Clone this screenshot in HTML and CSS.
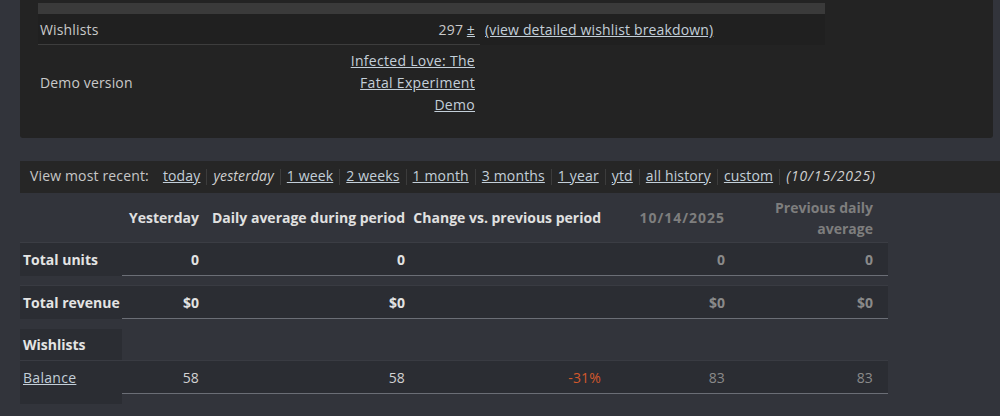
FILE: index.html
```html
<!DOCTYPE html>
<html lang="en">
<head>
    <meta charset="UTF-8">
    <title>Sales &amp; Activations</title>
    <link rel="stylesheet" href="styles.css">
</head>
<body>
    <div class="card">
        <table class="summary">
            <tr class="cap"><td colspan="3"></td></tr>
            <tr class="wish">
                <td class="label">Wishlists</td>
                <td class="num">297 <a href="#">±</a></td>
                <td class="extra"><a href="#">(view detailed wishlist breakdown)</a></td>
            </tr>
            <tr class="demo">
                <td class="label">Demo version</td>
                <td class="num"><a href="#">Infected Love: The Fatal Experiment Demo</a></td>
                <td class="extra"></td>
            </tr>
        </table>
    </div>

    <div class="range-bar">
        <span class="range-title">View most recent:</span>
        <a href="#">today</a><span class="sep"></span>
        <em>yesterday</em><span class="sep"></span>
        <a href="#">1 week</a><span class="sep"></span>
        <a href="#">2 weeks</a><span class="sep"></span>
        <a href="#">1 month</a><span class="sep"></span>
        <a href="#">3 months</a><span class="sep"></span>
        <a href="#">1 year</a><span class="sep"></span>
        <a href="#">ytd</a><span class="sep"></span>
        <a href="#">all history</a><span class="sep"></span>
        <a href="#">custom</a><span class="sep"></span>
        <em class="range-date">(10/15/2025)</em>
    </div>

    <table class="sales">
        <colgroup>
            <col class="c-label">
            <col class="c-yday">
            <col class="c-avg">
            <col class="c-change">
            <col class="c-prev">
            <col class="c-prevavg">
        </colgroup>
        <tr class="head">
            <th></th>
            <th>Yesterday</th>
            <th>Daily average during period</th>
            <th>Change vs. previous period</th>
            <th class="dim date">10/14/2025</th>
            <th class="dim wrap">Previous daily average</th>
        </tr>
        <tr class="row first">
            <td class="label">Total units</td>
            <td class="strong">0</td>
            <td class="strong">0</td>
            <td></td>
            <td class="strong dim">0</td>
            <td class="strong dim">0</td>
        </tr>
        <tr class="gap"><td colspan="6"></td></tr>
        <tr class="row">
            <td class="label">Total revenue</td>
            <td class="strong">$0</td>
            <td class="strong">$0</td>
            <td></td>
            <td class="strong dim">$0</td>
            <td class="strong dim">$0</td>
        </tr>
        <tr class="gap wide"><td colspan="6"></td></tr>
        <tr class="section">
            <td class="label">Wishlists</td>
            <td colspan="5"></td>
        </tr>
        <tr class="row">
            <td class="label link"><a href="#">Balance</a></td>
            <td>58</td>
            <td>58</td>
            <td class="neg">-31%</td>
            <td class="dim">83</td>
            <td class="dim">83</td>
        </tr>
        <tr class="tail">
            <td class="label"></td>
            <td colspan="5"></td>
        </tr>
    </table>
</body>
</html>
```

FILE: styles.css
```css
body {
    margin: 0;
    background: #32343b;
    font-family: "Open Sans", "Liberation Sans", sans-serif;
    font-size: 14px;
    letter-spacing: 0.15px;
    color: #c9c9c9;
}

a {
    color: #c3cfd9;
    text-decoration: underline;
}

/* top card */
.card {
    width: 973px;
    margin-left: 20px;
    padding: 3px 18px 17px;
    box-sizing: border-box;
    background: #232323;
    border-radius: 0 0 3px 3px;
}
.summary {
    width: 787px;
    border-collapse: collapse;
}
.summary td {
    padding: 0;
}
.summary .cap td {
    height: 11px;
    background: #3a3a3a;
}
.summary .wish td {
    height: 30px;
    background: #202020;
}
.summary .wish .label,
.summary .wish .num {
    border-bottom: 1px solid #3d3d3d;
}
.summary .label {
    width: 300px;
    padding-left: 2px;
}
.summary .num {
    width: 135px;
    padding-right: 5px;
    text-align: right;
}
.summary .extra {
    padding-left: 5px;
}
.summary .demo td {
    height: 76px;
    line-height: 22px;
}
.summary .demo a {
    letter-spacing: 0.3px;
}

/* range selector */
.range-bar {
    display: flex;
    align-items: center;
    height: 28px;
    margin: 23px 0 0 20px;
    padding: 0 0 4px 10px;
    background: #262626;
    color: #c6c6c6;
}
.range-title {
    margin-right: 14px;
}
.range-bar em {
    color: #cfcfcf;
}
.range-bar .range-date {
    letter-spacing: 0.85px;
}
.sep {
    display: inline-block;
    width: 1px;
    height: 16px;
    margin: 4px 6px 0;
    background: #3c3c3c;
}

/* sales table */
.sales {
    margin-left: 20px;
    width: 868px;
    border-collapse: separate;
    border-spacing: 0;
    table-layout: fixed;
}
.c-label { width: 102px; }
.c-yday { width: 82px; }
.c-avg { width: 206px; }
.c-change { width: 196px; }
.c-prev { width: 124px; }
.c-prevavg { width: 158px; }

.sales th,
.sales td {
    padding: 0 5px 0 0;
    text-align: right;
}
.sales th {
    height: 49px;
    border-bottom: 1px solid #3b3d44;
    font-weight: bold;
    letter-spacing: 0;
    color: #e0e0e0;
    white-space: nowrap;
    line-height: 21px;
}
.sales th.wrap {
    white-space: normal;
    padding-left: 10px;
}
.sales th.date {
    letter-spacing: 1px;
    padding-right: 5px;
}
.sales th:last-child,
.sales td:last-child {
    padding-right: 15px;
}
.sales th.dim {
    color: #7e7e7e;
}

.sales .row td {
    height: 32px;
    background: #2b2d33;
    border-top: 1px solid #393b42;
    border-bottom: 1px solid #6b6e76;
    color: #d2d2d2;
}
.sales .row.first td {
    border-top: none;
}
.sales .row td.label {
    border-bottom-color: transparent;
}
.sales td.label {
    padding: 0 0 0 3px;
    text-align: left;
    font-weight: bold;
    letter-spacing: 0;
    white-space: nowrap;
    color: #e4e4e4;
}
.sales td.link {
    font-weight: normal;
    letter-spacing: 0.3px;
}
.sales td.strong {
    font-weight: bold;
    letter-spacing: 0;
    color: #e2e2e2;
}
.sales td.dim,
.sales td.strong.dim {
    color: #8a8a8a;
}
.sales td.neg {
    color: #d2582c;
}

.sales .gap td {
    height: 9px;
}
.sales .gap.wide td {
    height: 10px;
}
.sales .section td {
    height: 31px;
}
.sales .section td.label {
    background: #2b2d33;
}
.sales .tail td {
    height: 10px;
}
.sales .tail td.label {
    background: #2b2d33;
}
```
